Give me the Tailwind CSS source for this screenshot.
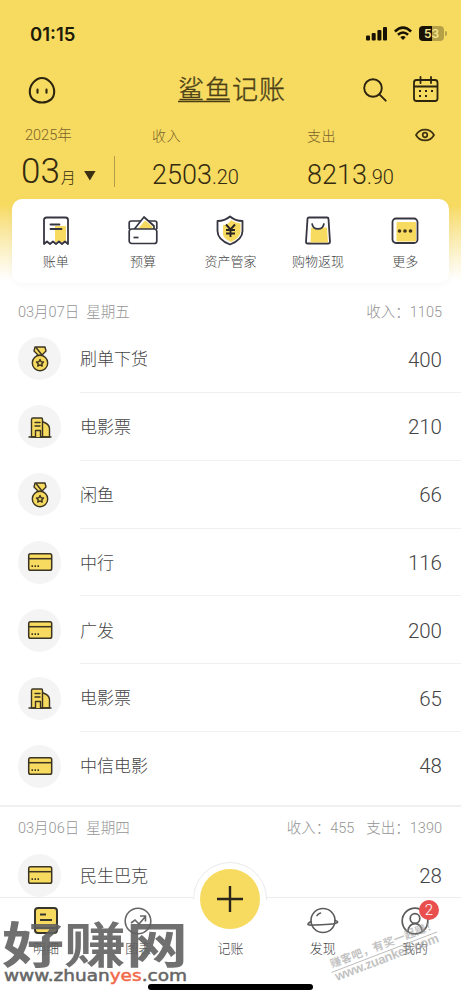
<!DOCTYPE html>
<html lang="zh-CN">
<head>
<meta charset="utf-8">
<meta name="viewport" content="width=device-width, initial-scale=1">
<title>鲨鱼记账</title>
<script src="https://cdn.jsdelivr.net/npm/@tailwindcss/browser@4"></script>
</head>
<body class="bg-white">
<svg class="hidden">
  <defs>
    <symbol id="medal" viewBox="0 0 26 26">
      <g fill="#f7da60" stroke="#3b3423" stroke-width="1.4" stroke-linejoin="round">
        <path d="M8 1h10l1 4-4.500 4.500h-3L7 5z"/><path d="M9 1.500l6 7.500" fill="none"/>
        <circle cx="13" cy="17" r="7.700"/>
        <path d="M13 13.500l1.100 2.200 2.400.3-1.700 1.700.4 2.400-2.200-1.200-2.200 1.200.4-2.400-1.700-1.700 2.400-.3z"/>
      </g>
    </symbol>
    <symbol id="building" viewBox="0 0 26 26">
      <g fill="#f7da60" stroke="#3b3423" stroke-width="1.400" stroke-linejoin="round" stroke-linecap="round">
        <path d="M15 7.500l3.500 1.500q4 2 4 6v8h-8z"/><path d="M4.500 23V5.500q0-1.500 1.500-1.500h8.500q1 0 1 1.500V23z"/><path d="M8 8.500h5M8 12h5M2 23h22" fill="none"/><path d="M8.500 23v-6.500h5V23"/>
      </g>
    </symbol>
    <symbol id="bank" viewBox="0 0 26 26">
      <rect x="1.700" y="4.700" width="23" height="16.600" rx="1.800" fill="#f7da60" stroke="#3b3423" stroke-width="1.500"/>
      <path d="M2 9.700h22.500" stroke="#3b3423" stroke-width="1.500"/><path d="M4.500 17.200h1.500m1.500 0h1.500m1.500 0h1.500" stroke="#3b3423" stroke-width="1.800"/>
    </symbol>
  </defs>
</svg>
<div class="relative flex h-[1000px] w-[461px] flex-col overflow-hidden bg-white font-['Roboto','Noto_Sans_CJK_SC',sans-serif] font-light">
  <header class="h-[283px] shrink-0 bg-linear-to-b from-[#f7da60] from-[205px] to-white to-[280px]">
    <div class="flex h-[67px] items-center justify-between pr-[14px] pl-[30px]">
      <span class="pt-px font-['Inter',sans-serif] text-[18.500px] leading-none font-semibold text-[#201a08]">01:15</span>
      <div class="flex items-center gap-[7px]">
        <svg class="h-[15px] w-[21px]" viewBox="0 0 21 15" fill="#171204"><rect x="0" y="9.500" width="4" height="5" rx="1"/><rect x="5.700" y="7" width="4" height="7.500" rx="1"/><rect x="11.400" y="4" width="4" height="10.500" rx="1"/><rect x="17" y="1" width="4" height="13.500" rx="1"/></svg>
        <svg class="h-[15px] w-[18px]" viewBox="0 0 18 15" fill="none" stroke="#171204" stroke-width="2.500"><path d="M.9 5.500Q9-2.200 17.100 5.500M3.900 8.800q5.100-4.500 10.200 0"/><path d="M6.300 11.200q2.700-2.300 5.400 0L9 14z" fill="#171204" stroke="none"/></svg>
        <div class="flex items-center gap-px">
          <div class="flex h-[15px] w-[25px] items-center justify-center overflow-hidden rounded-[4px] bg-linear-to-r from-[#171204] from-50% to-[#b5a047] to-50% font-['Inter',sans-serif] text-[12px] font-semibold text-[#f7e58f]">53</div>
          <div class="h-[5px] w-[2px] rounded-r bg-[#b5a047]"></div>
        </div>
      </div>
    </div>
    <div class="flex h-[46px] items-center pl-[28px]">
      <svg class="h-[28px] w-[28px]" viewBox="0 0 28 28" fill="none" stroke="#2c240e" stroke-width="2.100" stroke-linecap="round"><path d="M14 2C8 2 1.800 8.500 1.800 15.500c0 7 5 11 12.200 11s12.200-4 12.200-11C26.200 8.500 20 2 14 2z"/><path d="M9.500 13.500v3.300M18.500 13.500v3.300"/></svg>
      <svg class="ml-[119px] h-[42px] w-[114px]" viewBox="0 0 114 42"><text x="3" y="29.500" font-size="26" font-weight="300" textLength="107" fill="#4a3e17" stroke="#4a3e17" stroke-width=".35" font-family="'Noto Sans CJK SC',sans-serif">鲨鱼记账</text><path d="M3 32.500h52" stroke="#4a3e17" stroke-width="1.300"/></svg>
      <svg class="ml-[73px] h-[26px] w-[26px]" viewBox="0 0 26 26" fill="none" stroke="#2c240e" stroke-width="1.900" stroke-linecap="round"><circle cx="11" cy="11" r="8.800"/><path d="M17.400 17.400l6.300 6.300"/></svg>
      <svg class="ml-[24px] h-[28px] w-[28px] -translate-y-px" viewBox="0 0 28 28" fill="none" stroke="#2c240e" stroke-width="1.800" stroke-linecap="round"><rect x="2" y="5" width="23.500" height="21" rx="2.500"/><path d="M2.500 11.500h22.500M8.500 2v6M19 2v6"/><path d="M7 16h2m4 0h2m4 0h2M7 21h2m4 0h2" stroke-width="2.200" stroke-linecap="butt"/></svg>
    </div>
    <div class="flex h-[86px]">
      <div class="w-[152px] pt-[13px] pl-[25px] text-[#57491c]">
        <div class="h-[20px] text-[14.500px] leading-[20px] text-[#78632a]">2025年</div>
        <div class="flex h-[46px] items-center">
          <div class="flex w-[89px] items-baseline pt-[5px] text-[#332a10]"><span class="-ml-[4px] text-[35px] leading-[42px]">03</span><span class="ml-px text-[15px]">月</span><span class="ml-[8px] h-[10px] w-[12px] -translate-y-[2px] bg-[#3b3012] [clip-path:polygon(0_0,100%_0,50%_100%)]"></span></div>
          <div class="mt-[4px] h-[31px] w-px bg-[#b39d48]"></div>
        </div>
      </div>
      <div class="w-[155px] pt-[13px]">
        <div class="text-[14px] leading-[20px] tracking-[0.5px] text-[#78632a]">收入</div>
        <div class="pt-[12px] leading-[34px] text-[#332a10]"><span class="text-[27px]">2503</span><span class="text-[20px]">.20</span></div>
      </div>
      <div class="flex-1 pt-[13px]">
        <div class="flex items-center text-[14px] leading-[20px] tracking-[0.5px] text-[#78632a]"><span class="w-[108px]">支出</span>
          <svg class="h-[14px] w-[20px] -translate-y-px" viewBox="0 0 20 14" fill="none" stroke="#3d3311" stroke-width="1.700"><path d="M1 7C5-.2 15-.2 19 7c-4 7.200-14 7.200-18 0z"/><circle cx="10" cy="7" r="2.300"/></svg>
        </div>
        <div class="pt-[12px] leading-[34px] text-[#332a10]"><span class="text-[27px]">8213</span><span class="text-[20px]">.90</span></div>
      </div>
    </div>
    <div class="mx-[12px] grid h-[84px] grid-cols-5 rounded-[10px] bg-white text-[13px] text-[#444] shadow-[0_2px_8px_rgba(0,0,0,0.03)]">
      <div class="flex flex-col items-center pt-[16px]"><svg class="h-[31px] w-[30px]" viewBox="0 0 30 31"><path d="M14 11h11v16H14z" fill="#f7da60"/><g fill="none" stroke="#363642" stroke-width="1.800" stroke-linejoin="round" stroke-linecap="round"><path d="M3 29V5q0-2.500 2.500-2.500h19Q27 2.500 27 5v24l-3-2.500-3 2.500-3-2.500-3 2.500-3-2.500L9 29l-3-2.500z"/><path d="M9.500 9.500h9M9.500 14h11"/></g></svg><span class="leading-[31px]">账单</span></div>
      <div class="flex flex-col items-center pt-[16px]"><svg class="h-[31px] w-[30px]" viewBox="0 0 30 31"><g fill="none" stroke="#363642" stroke-width="1.700" stroke-linejoin="round"><path d="M1.200 14V8q0-2 2-2h23.600q2 0 2 2v6"/><path d="M6 14.500L16 2l10 9v3.500z" fill="#fff"/><path d="M9.500 14.500L17 5.500l7.500 6v3z" fill="#f7da60" stroke="none"/><rect x="1.200" y="14" width="27.600" height="14.500" rx="2.500" fill="#fff"/><path d="M5.500 22.500h5"/></g></svg><span class="leading-[31px]">预算</span></div>
      <div class="flex flex-col items-center pt-[16px]"><svg class="h-[31px] w-[30px]" viewBox="0 0 30 31"><path d="M15 1.500C11 5 7 6 2.500 6v10c0 7 6 11 12.500 13.500C21.500 27 27.500 23 27.500 16V6C23 6 19 5 15 1.500z" fill="#fff" stroke="#363642" stroke-width="1.800" stroke-linejoin="round"/><path d="M16 5c3 2 6 3 9.500 3.200V16c0 5-4 8.500-9.500 11-4-2-7-4-8-7V10c4 0 6-2 8-5z" fill="#f7da60"/><path d="M11 9.500l4.500 5 4.500-5M15.500 14.500V22M11 15h9M11 18.500h9" fill="none" stroke="#292522" stroke-width="1.900"/></svg><span class="leading-[31px]">资产管家</span></div>
      <div class="flex flex-col items-center pt-[16px]"><svg class="h-[31px] w-[30px]" viewBox="0 0 30 31"><path d="M6 2.500h18q1.500 0 1.500 1.500l1.500 23q0 1.500-1.500 1.500h-21q-1.500 0-1.500-1.500L4.500 4q0-1.500 1.500-1.500z" fill="#fff" stroke="#363642" stroke-width="1.800"/><path d="M8 12.500h16l1 15H7.500z" fill="#f7da60"/><path d="M9 8q6 12 12 0z" fill="#fff"/><path d="M9 8.300c1 7.500 11 7.500 12 0" fill="none" stroke="#363642" stroke-width="1.700"/></svg><span class="leading-[31px]">购物返现</span></div>
      <div class="flex flex-col items-center pt-[16px]"><svg class="h-[31px] w-[30px]" viewBox="0 0 30 31"><rect x="2.500" y="3.500" width="25" height="24.500" rx="3.500" fill="#fff" stroke="#363642" stroke-width="1.800"/><rect x="6.500" y="7" width="19.500" height="19.500" rx="1" fill="#f7da60"/><g fill="#40321b"><circle cx="9.500" cy="16" r="1.800"/><circle cx="15" cy="16" r="1.800"/><circle cx="20.500" cy="16" r="1.800"/></g></svg><span class="leading-[31px]">更多</span></div>
    </div>
  </header>

  <section class="flex h-[522px] shrink-0 flex-col">
    <div class="flex h-[42px] items-center justify-between pt-[18px] pr-[19px] pl-[18px] text-[14.500px] text-[#949494]"><span>03月07日&nbsp; 星期五</span><span>收入：1105</span></div>
    <div class="grid h-[475px] grid-rows-7 text-[17px] text-[#444]">
      <div class="flex items-center pl-[18px]"><span class="flex size-[43px] items-center justify-center rounded-full bg-[#f4f4f4]"><svg class="size-[26px]"><use href="#medal"/></svg></span><div class="ml-[19px] flex h-full flex-1 items-center justify-between border-b border-[#f0f0f0] pt-[3px] pr-[19px]"><span>刷单下货</span><span class="text-[20.500px]">400</span></div></div>
      <div class="flex items-center pl-[18px]"><span class="flex size-[43px] items-center justify-center rounded-full bg-[#f4f4f4]"><svg class="size-[26px]"><use href="#building"/></svg></span><div class="ml-[19px] flex h-full flex-1 items-center justify-between border-b border-[#f0f0f0] pt-[3px] pr-[19px]"><span>电影票</span><span class="text-[20.500px]">210</span></div></div>
      <div class="flex items-center pl-[18px]"><span class="flex size-[43px] items-center justify-center rounded-full bg-[#f4f4f4]"><svg class="size-[26px]"><use href="#medal"/></svg></span><div class="ml-[19px] flex h-full flex-1 items-center justify-between border-b border-[#f0f0f0] pt-[3px] pr-[19px]"><span>闲鱼</span><span class="text-[20.500px]">66</span></div></div>
      <div class="flex items-center pl-[18px]"><span class="flex size-[43px] items-center justify-center rounded-full bg-[#f4f4f4]"><svg class="size-[26px]"><use href="#bank"/></svg></span><div class="ml-[19px] flex h-full flex-1 items-center justify-between border-b border-[#f0f0f0] pt-[3px] pr-[19px]"><span>中行</span><span class="text-[20.500px]">116</span></div></div>
      <div class="flex items-center pl-[18px]"><span class="flex size-[43px] items-center justify-center rounded-full bg-[#f4f4f4]"><svg class="size-[26px]"><use href="#bank"/></svg></span><div class="ml-[19px] flex h-full flex-1 items-center justify-between border-b border-[#f0f0f0] pt-[3px] pr-[19px]"><span>广发</span><span class="text-[20.500px]">200</span></div></div>
      <div class="flex items-center pl-[18px]"><span class="flex size-[43px] items-center justify-center rounded-full bg-[#f4f4f4]"><svg class="size-[26px]"><use href="#building"/></svg></span><div class="ml-[19px] flex h-full flex-1 items-center justify-between border-b border-[#f0f0f0] pt-[3px] pr-[19px]"><span>电影票</span><span class="text-[20.500px]">65</span></div></div>
      <div class="flex items-center pl-[18px]"><span class="flex size-[43px] items-center justify-center rounded-full bg-[#f4f4f4]"><svg class="size-[26px]"><use href="#bank"/></svg></span><div class="ml-[19px] flex h-full flex-1 items-center justify-between pt-px pr-[19px]"><span>中信电影</span><span class="text-[20.500px]">48</span></div></div>
    </div>
  </section>
  <section class="h-[92px] shrink-0 overflow-hidden border-t-2 border-[#f0f0f0]">
    <div class="flex h-[34px] items-center justify-between pt-[10px] pr-[19px] pl-[18px] text-[14.500px] text-[#949494]"><span>03月06日&nbsp; 星期四</span><span class="flex gap-[12px]"><span>收入：455</span><span>支出：1390</span></span></div>
    <div class="flex h-[68px] items-center pl-[18px] text-[17px] text-[#444]"><span class="flex size-[43px] items-center justify-center rounded-full bg-[#f4f4f4]"><svg class="size-[26px]"><use href="#bank"/></svg></span><div class="ml-[19px] flex flex-1 items-center justify-between pt-[3px] pr-[19px]"><span>民生巴克</span><span class="text-[20.500px]">28</span></div></div>
  </section>

  <nav class="relative grid h-[103px] shrink-0 grid-cols-5 border-t border-[#ececec] bg-white text-[13px] text-[#444]">
    <div class="flex flex-col items-center pt-[8px]"><svg class="h-[30px] w-[28px]" viewBox="0 0 28 30"><rect x="3" y="2" width="22" height="25" rx="3" fill="#f7da60" stroke="#38352c" stroke-width="2"/><path d="M8 8.500h6M8 14h12M3 22h22" stroke="#38352c" stroke-width="2"/></svg><span class="leading-[25px]">明细</span></div>
    <div class="flex flex-col items-center pt-[8px]"><svg class="h-[30px] w-[28px]" viewBox="0 0 28 30" fill="none" stroke="#666" stroke-width="1.600"><circle cx="14" cy="15" r="12.800"/><path d="M7 17l4-3 4 4 6-7M16 10h5.500v5.500"/></svg><span class="leading-[25px]">图表</span></div>
    <div class="flex flex-col items-center pt-[38px]">
      <div class="absolute -top-[36px] flex size-[74px] items-center justify-center rounded-full border border-[#e8e8ee] bg-white [clip-path:inset(0_0_36px_0)]"></div>
      <div class="absolute -top-[29px] flex size-[60px] items-center justify-center rounded-full bg-[#f7da60]"><svg class="size-[26px]" viewBox="0 0 26 26" stroke="#29251a" stroke-width="2.400"><path d="M13 0v26M0 13h26"/></svg></div>
      <span class="leading-[25px]">记账</span></div>
    <div class="flex flex-col items-center pt-[8px]"><svg class="h-[30px] w-[32px]" viewBox="0 0 32 30" fill="none" stroke="#5c5c5c" stroke-width="1.600" stroke-linecap="round"><circle cx="16" cy="14.500" r="12"/><path d="M4 15.500C-1 18.500.500 19.500 7 19c8-.5 14 0 21-1.500 4-1 3.500-2 0-3M10 9.500q1.500-2 3.500-2.500"/></svg><span class="leading-[25px]">发现</span></div>
    <div class="flex flex-col items-center pt-[8px]"><svg class="h-[30px] w-[28px]" viewBox="0 0 28 30" fill="none" stroke="#5c5c5c" stroke-width="1.700"><circle cx="14" cy="15" r="12.800"/><circle cx="14" cy="12.500" r="4.800"/><path d="M7 25.500c0-10.500 14-10.500 14 0"/></svg><span class="leading-[25px]">我的</span></div>
    <span class="absolute top-[2px] left-[419px] flex size-[20px] items-center justify-center rounded-full bg-[#ea4f50] text-[15px] text-white">2</span>
    <div class="absolute top-[86px] left-[148px] h-[6px] w-[165px] rounded-full bg-black"></div>
  </nav>

  <svg class="pointer-events-none absolute top-[905px] left-0 h-[95px] w-[461px]" viewBox="0 905 461 95">
    <g transform="translate(332 968) rotate(-21)" fill="#999" fill-opacity=".6"><text x="0" y="0" font-size="11" font-weight="700" textLength="113" font-family="'Noto Sans CJK SC',sans-serif">赚客吧，有奖一起赚！</text><path d="M-2 4h113" stroke="#aaa" stroke-width=".7"/><text x="0" y="14" font-size="13" font-weight="700" textLength="110" font-family="'Liberation Sans',sans-serif">www.zuanke8.com</text></g>
    <text x="2" y="963" font-size="49" font-weight="700" textLength="186" lengthAdjust="spacingAndGlyphs" fill="#606060" fill-opacity=".9" font-family="'Noto Sans CJK SC',sans-serif">好赚网</text>
    <text x="4" y="981" font-size="16" font-weight="400" textLength="183" lengthAdjust="spacingAndGlyphs" fill="#666" stroke="#666" stroke-width=".5" font-family="'DejaVu Sans',sans-serif">www.zhuan<tspan fill="#f26a4b" stroke="#f26a4b">yes</tspan>.com</text>
  </svg>
</div>
</body>
</html>
